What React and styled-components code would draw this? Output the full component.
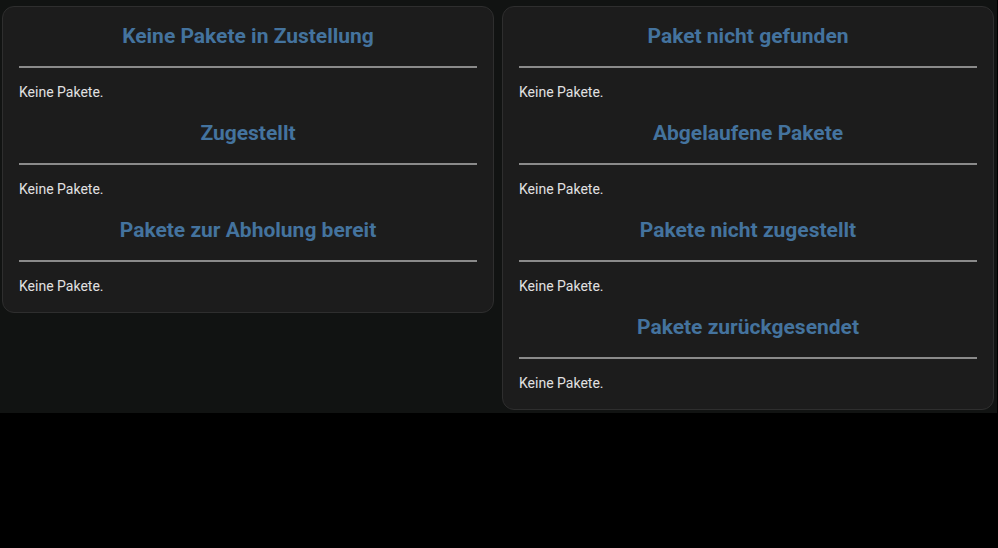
import React from "react";
import styled, { createGlobalStyle } from "styled-components";

const Global = createGlobalStyle`
  html, body { margin: 0; padding: 0; background: #000; }
  body { font-family: Roboto, "Noto Sans", sans-serif; }
`;

const Dashboard = styled.div`
  width: 997px;
  box-sizing: border-box;
  background: #111312;
  padding: 6px 4px 3px 2px;
  display: grid;
  grid-template-columns: 492px 492px;
  column-gap: 8px;
  align-items: start;
`;

const Card = styled.div`
  background: #1c1c1c;
  border: 1px solid #2e2e2e;
  border-radius: 12px;
  padding: 17px 16px 16px 16px;
  box-sizing: border-box;
`;

const Section = styled.section`
  & + & { margin-top: 19px; }
`;

const Title = styled.h2`
  margin: 0 0 18px;
  font-size: 21px;
  line-height: 24px;
  font-weight: 700;
  text-align: center;
  color: #44739e;
`;

const Divider = styled.hr`
  margin: 0;
  border: none;
  height: 2px;
  background: #8a8a8a;
`;

const Empty = styled.p`
  margin: 14px 0 0;
  font-size: 14px;
  line-height: 20px;
  color: #e1e1e1;
`;

const left = ["Keine Pakete in Zustellung", "Zugestellt", "Pakete zur Abholung bereit"];
const right = [
  "Paket nicht gefunden",
  "Abgelaufene Pakete",
  "Pakete nicht zugestellt",
  "Pakete zurückgesendet",
];

function PackageCard({ titles }) {
  return (
    <Card>
      {titles.map((t) => (
        <Section key={t}>
          <Title>{t}</Title>
          <Divider />
          <Empty>Keine Pakete.</Empty>
        </Section>
      ))}
    </Card>
  );
}

export default function App() {
  return (
    <>
      <Global />
      <Dashboard>
        <PackageCard titles={left} />
        <PackageCard titles={right} />
      </Dashboard>
    </>
  );
}
